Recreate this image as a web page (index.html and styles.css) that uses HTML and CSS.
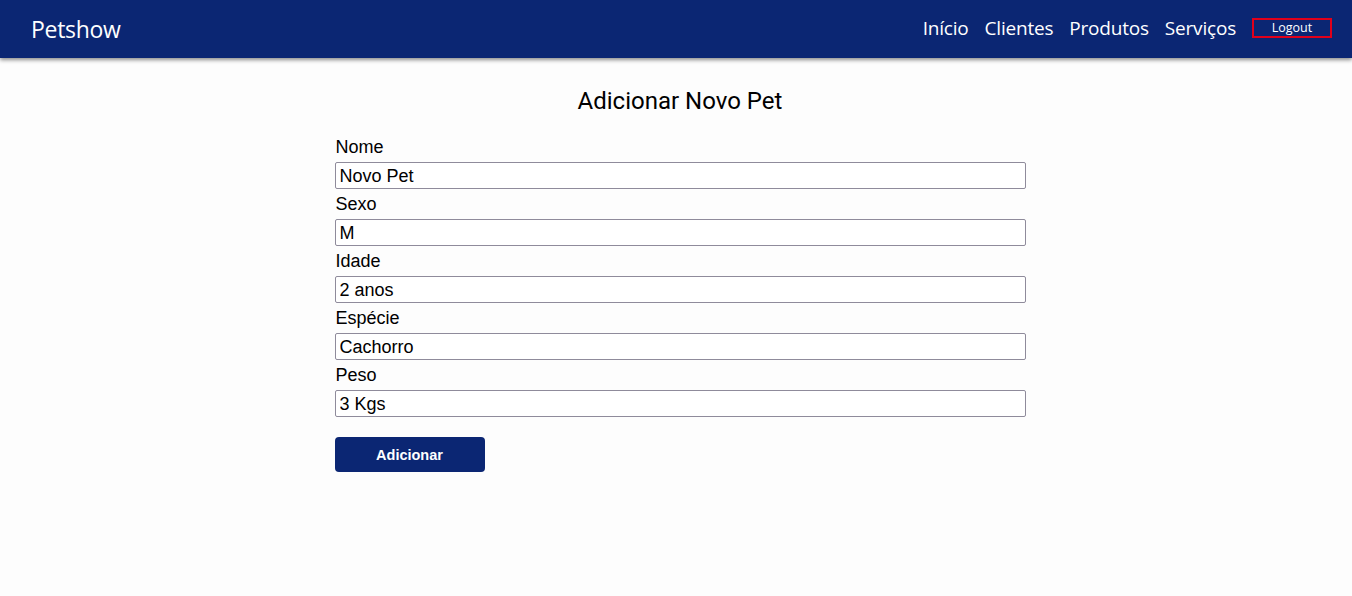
FILE: index.html
```html
<!DOCTYPE html>
<html lang="pt">
<head>
<meta charset="utf-8">
<title>Petshow</title>
<link rel="stylesheet" href="styles.css">
</head>
<body>
<header class="navbar">
  <a class="brand" href="#">Petshow</a>
  <nav class="nav">
    <a class="nav-link" href="#">Início</a>
    <a class="nav-link" href="#">Clientes</a>
    <a class="nav-link" href="#">Produtos</a>
    <a class="nav-link" href="#">Serviços</a>
    <button class="logout" type="button">Logout</button>
  </nav>
</header>
<main class="content">
  <h1 class="title">Adicionar Novo Pet</h1>
  <form class="form">
    <label class="label" for="nome">Nome</label>
    <input class="input" id="nome" type="text" value="Novo Pet">
    <label class="label" for="sexo">Sexo</label>
    <input class="input" id="sexo" type="text" value="M">
    <label class="label" for="idade">Idade</label>
    <input class="input" id="idade" type="text" value="2 anos">
    <label class="label" for="especie">Espécie</label>
    <input class="input" id="especie" type="text" value="Cachorro">
    <label class="label" for="peso">Peso</label>
    <input class="input" id="peso" type="text" value="3 Kgs">
    <button class="submit" type="button">Adicionar</button>
  </form>
</main>
</body>
</html>
```
FILE: styles.css
```css
* { box-sizing: border-box; }
html, body { margin: 0; padding: 0; }
body {
  background: #fdfdfd;
  font-family: "Liberation Sans", Arial, sans-serif;
  color: #000;
  min-height: 596px;
}
.navbar {
  height: 58px;
  background: #0b2673;
  display: flex;
  align-items: center;
  justify-content: space-between;
  padding: 0 20px 2px 31px;
  box-shadow: 0 2px 4px rgba(0,0,0,0.45);
}
.brand {
  color: #fff;
  text-decoration: none;
  font-family: "Open Sans", "Noto Sans", sans-serif;
  font-size: 23px;
  letter-spacing: -0.3px;
  padding-top: 2px;
}
.nav {
  display: flex;
  align-items: center;
  gap: 16px;
}
.nav-link {
  color: #fff;
  text-decoration: none;
  font-family: "Open Sans", "Noto Sans", sans-serif;
  font-size: 19px;
  letter-spacing: -0.2px;
  padding-bottom: 1px;
}
.logout {
  width: 80px;
  height: 20px;
  background: transparent;
  border: 2px solid #e0001a;
  color: #fff;
  font-family: "Open Sans", "Noto Sans", sans-serif;
  font-size: 12.5px;
  padding: 0;
  line-height: 16px;
}
.content {
  width: 691px;
  margin: 0 auto;
  transform: translateX(4px);
}
.title {
  margin: 30px 0 0;
  text-align: center;
  font-weight: 400;
  font-size: 24px;
  line-height: 26px;
  font-family: Roboto, sans-serif;
}
.form {
  display: flex;
  flex-direction: column;
  align-items: stretch;
  margin-top: 18px;
}
.label {
  display: block;
  font-family: "Liberation Sans", Arial, sans-serif;
  font-size: 18px;
  line-height: 24px;
  margin: 3px 0 3px;
  padding-left: 1px;
}
.input {
  display: block;
  width: 100%;
  height: 27px;
  border: 1px solid #8f8b9b;
  border-radius: 2px;
  background: #fff;
  padding: 1px 4px 0;
  font-family: "Liberation Sans", Arial, sans-serif;
  font-size: 18px;
  color: #000;
}
.submit {
  margin-top: 20px;
  width: 150px;
  height: 35px;
  background: #0b2673;
  color: #fff;
  border: none;
  border-radius: 4px;
  font-family: "Liberation Sans", Arial, sans-serif;
  font-weight: 700;
  font-size: 14.5px;
}
```
